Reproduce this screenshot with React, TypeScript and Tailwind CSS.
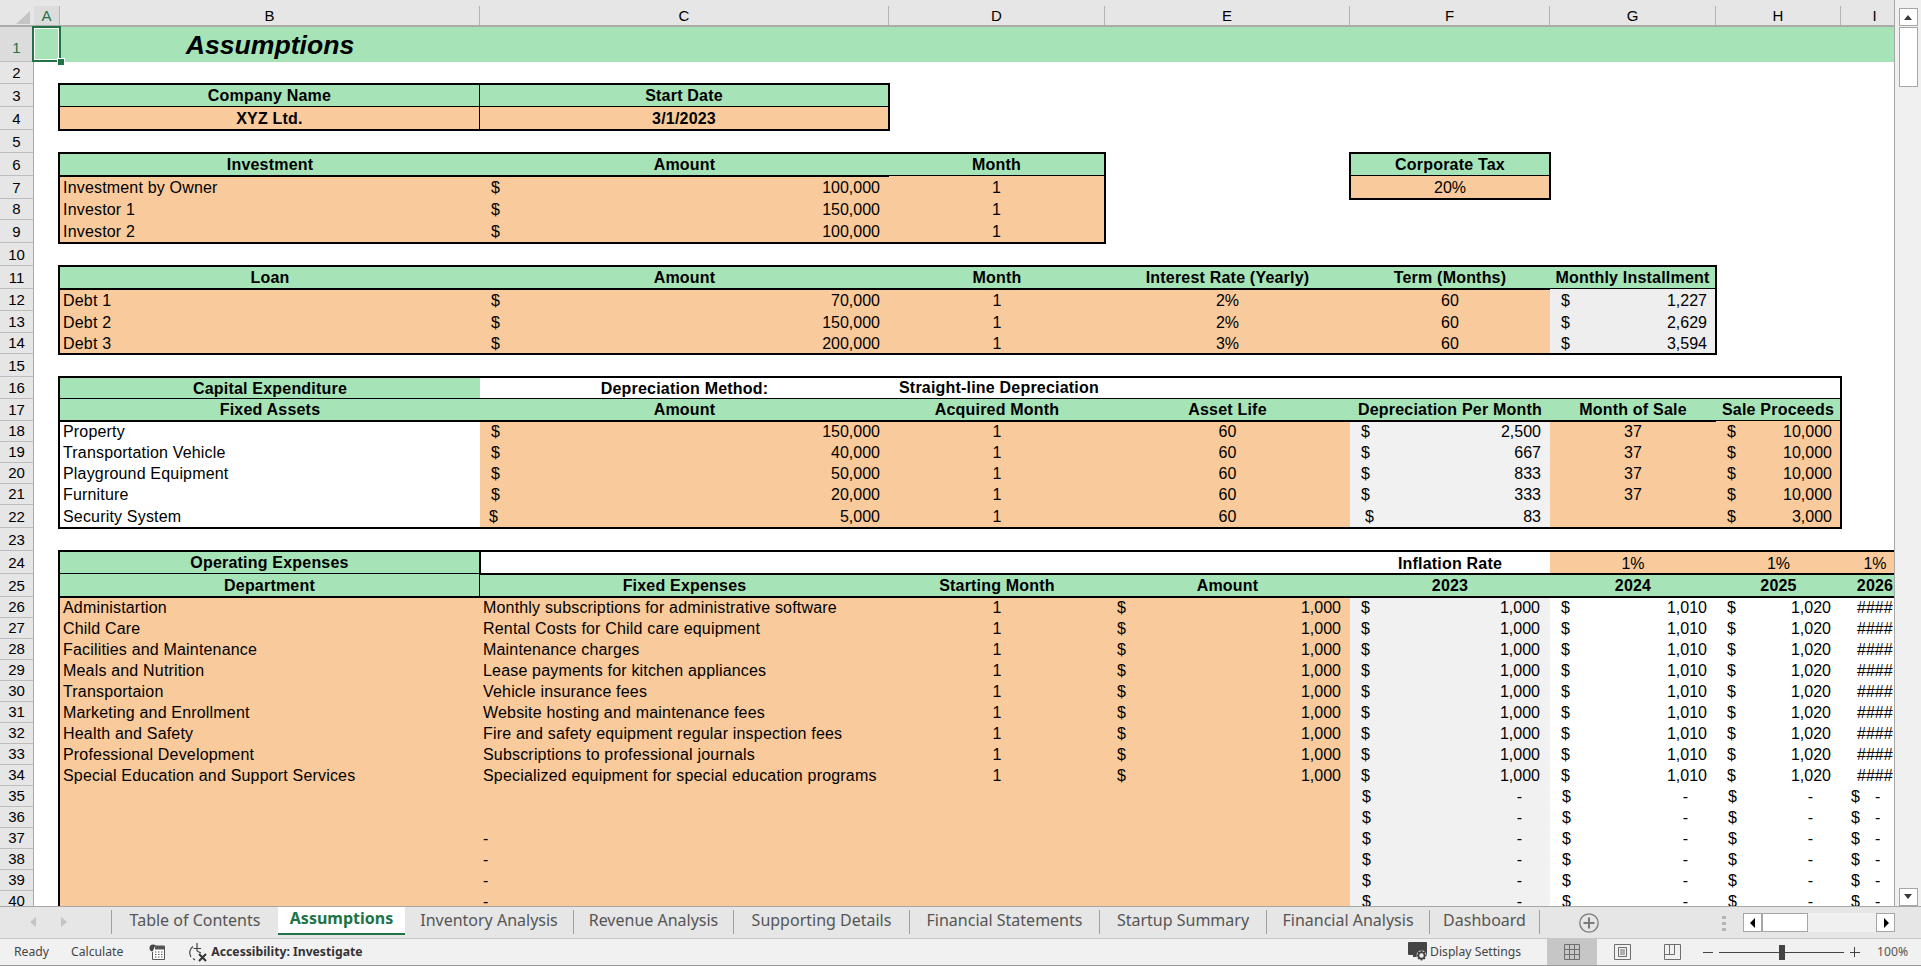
import React from "react";

const GR = "bg-[#a6e3b7]";
const OR = "bg-[#f8ca9c]";
const GY = "bg-[#f1f1f1]";
// borders straddle the grid line, as they do on a spreadsheet
const T = "border-t-2 border-t-black -mt-px";
const B = "relative border-b-2 border-b-black -mb-px";
const R = "relative border-r-2 border-r-black -mr-px";

function RowHead({ n, active }: { n: number; active?: boolean }) {
  return (
    <div
      className={
        "flex items-end justify-center border-b border-[#bdbdbd] border-r border-r-[#ababab] text-[15px] leading-[17px] font-['Liberation_Sans',sans-serif] " +
        (active ? "bg-[#dcdcdc] text-[#217346] pb-[5px]" : "bg-[#e6e6e6] text-black pb-[2px]")
      }
    >
      {n}
    </div>
  );
}

function Row({ n, edge, a, children }: { n: number; edge?: boolean; a?: string; children?: React.ReactNode }) {
  return (
    <>
      <RowHead n={n} active={n === 1} />
      <div className={(edge ? "relative border-r-2 border-r-black " : "") + (a ?? "")} />
      {children}
    </>
  );
}

function Hd({ children, className }: { children?: React.ReactNode; className?: string }) {
  return <div className={"flex items-center justify-center pt-[1px] font-bold whitespace-nowrap tracking-[0.2px] " + (className ?? "")}>{children}</div>;
}
function Ctr({ children, className }: { children?: React.ReactNode; className?: string }) {
  return <div className={"flex items-center justify-center pt-[1px] whitespace-nowrap " + (className ?? "")}>{children}</div>;
}
function Lbl({ children, className }: { children?: React.ReactNode; className?: string }) {
  return <div className={"flex items-center pl-[3px] pt-[1px] whitespace-nowrap tracking-[0.18px] " + (className ?? "")}>{children}</div>;
}
function Acct({ v, className }: { v: string; className?: string }) {
  return (
    <div className={"flex items-center justify-between pt-[1px] whitespace-nowrap " + (className ?? "pl-[11px] pr-[9px]")}>
      <span>$</span>
      <span>{v}</span>
    </div>
  );
}

const investRows = [
  ["Investment by Owner", "100,000"],
  ["Investor 1", "150,000"],
  ["Investor 2", "100,000"],
];
const debtRows = [
  ["Debt 1", "70,000", "2%", "1,227"],
  ["Debt 2", "150,000", "2%", "2,629"],
  ["Debt 3", "200,000", "3%", "3,594"],
];
const assetRows = [
  ["Property", "150,000", "2,500"],
  ["Transportation Vehicle", "40,000", "667"],
  ["Playground Equipment", "50,000", "833"],
  ["Furniture", "20,000", "333"],
];
const expenseRows = [
  ["Administartion", "Monthly subscriptions for administrative software"],
  ["Child Care", "Rental Costs for Child care equipment"],
  ["Facilities and Maintenance", "Maintenance charges"],
  ["Meals and Nutrition", "Lease payments for kitchen appliances"],
  ["Transportaion", "Vehicle insurance fees"],
  ["Marketing and Enrollment", "Website hosting and maintenance fees"],
  ["Health and Safety", "Fire and safety equipment regular inspection fees"],
  ["Professional Development", "Subscriptions to professional journals"],
  ["Special Education and Support Services", "Specialized equipment for special education programs"],
];

const colHeads: [string, string][] = [
  ["A", "bg-[#dcdcdc] text-[#217346]"],
  ["B", ""],
  ["C", ""],
  ["D", ""],
  ["E", ""],
  ["F", ""],
  ["G", ""],
  ["H", ""],
  ["I", ""],
];

function Tri({ d, c = "#000", w = 8, h = 10 }: { d: string; c?: string; w?: number; h?: number }) {
  return (
    <svg width={w} height={h} viewBox="0 0 8 10">
      <path d={d} fill={c} />
    </svg>
  );
}

function Sheet() {
  return (
    <div className="relative w-[1894px] h-[906px] overflow-hidden bg-white">
      <div className="grid grid-cols-[34px_26px_420px_409px_216px_245px_200px_166px_125px_68px] grid-rows-[27px_35px_22px_23px_23px_23px_23px_23px_21px_23px_23px_23px_22px_22px_21px_23px_22px_22px_21px_21px_21px_21px_23px_23px_23px_23px_21px_21px_21px_21px_21px_21px_21px_21px_21px_21px_21px_21px_21px_21px_21px] w-[1909px] text-[16px] leading-[18px] text-black font-['Liberation_Sans',sans-serif]">
        {/* column headers */}
        <div className="relative bg-[#e6e6e6] border-b-2 border-[#ababab]">
          <svg className="absolute left-[16px] top-[11px]" width="14" height="13" viewBox="0 0 14 13">
            <path d="M14 0V13H0Z" fill="#c4c4c4" />
          </svg>
        </div>
        {colHeads.map(([h, cls]) => (
          <div key={h} className="bg-[#e6e6e6] pt-[6px] border-b-2 border-[#ababab]">
            <div className={"flex items-center justify-center h-full border-r border-[#b4b4b4] text-[15px] leading-none " + cls}>{h}</div>
          </div>
        ))}

        <Row n={1} a={GR}>
          <Hd className={GR + " text-[26.6px] italic !tracking-normal"}>Assumptions</Hd>
          <div className={"col-span-7 " + GR} />
        </Row>
        <Row n={2}>
          <div className="col-span-8" />
        </Row>
        <Row n={3} edge a="-mt-px">
          <Hd className={`${GR} ${T} ${B} ${R}`}>Company Name</Hd>
          <Hd className={`${GR} ${T} ${B} ${R}`}>Start Date</Hd>
          <div className="col-span-6" />
        </Row>
        <Row n={4} edge a="-mb-px">
          <Hd className={`${OR} ${B} border-r border-r-black`}>XYZ Ltd.</Hd>
          <Hd className={`${OR} ${B} ${R}`}>3/1/2023</Hd>
          <div className="col-span-6" />
        </Row>
        <Row n={5}>
          <div className="col-span-8" />
        </Row>
        <Row n={6} edge a="-mt-px">
          <Hd className={`${GR} ${T} ${B}`}>Investment</Hd>
          <Hd className={`${GR} ${T} ${B}`}>Amount</Hd>
          <Hd className={`${GR} ${T} ${B} ${R}`}>Month</Hd>
          <div />
          <Hd className={`${GR} ${T} ${B} border-x-2 border-x-black -mx-px`}>Corporate Tax</Hd>
          <div className="col-span-3" />
        </Row>
        {investRows.map(([l, v], i) => {
          const b = i === 2 ? B : "";
          return (
            <Row key={l} n={7 + i} edge a={i === 2 ? "-mb-px" : ""}>
              <Lbl className={`${OR} ${b}`}>{l}</Lbl>
              <Acct v={v} className={`${OR} pl-[11px] pr-[9px] ${b}`} />
              <Ctr className={`${OR} ${R} ${b}`}>1</Ctr>
              <div />
              {i === 0 ? <Ctr className={`${OR} ${B} border-x-2 border-x-black -mx-px`}>20%</Ctr> : <div />}
              <div className="col-span-3" />
            </Row>
          );
        })}
        <Row n={10}>
          <div className="col-span-8" />
        </Row>
        <Row n={11} edge a="-mt-px">
          <Hd className={`${GR} ${T} ${B}`}>Loan</Hd>
          <Hd className={`${GR} ${T} ${B}`}>Amount</Hd>
          <Hd className={`${GR} ${T} ${B}`}>Month</Hd>
          <Hd className={`${GR} ${T} ${B}`}>Interest Rate (Yearly)</Hd>
          <Hd className={`${GR} ${T} ${B}`}>Term (Months)</Hd>
          <Hd className={`${GR} ${T} ${B} ${R}`}>Monthly Installment</Hd>
          <div className="col-span-2" />
        </Row>
        {debtRows.map(([l, v, r, m], i) => {
          const b = i === 2 ? B : "";
          return (
            <Row key={l} n={12 + i} edge a={i === 2 ? "-mb-px" : ""}>
              <Lbl className={`${OR} ${b}`}>{l}</Lbl>
              <Acct v={v} className={`${OR} pl-[11px] pr-[9px] ${b}`} />
              <Ctr className={`${OR} ${b}`}>1</Ctr>
              <Ctr className={`${OR} ${b}`}>{r}</Ctr>
              <Ctr className={`${OR} ${b}`}>60</Ctr>
              <Acct v={m} className={`bg-[#eeeeee] pl-[11px] pr-[8px] ${R} ${b}`} />
              <div className="col-span-2" />
            </Row>
          );
        })}
        <Row n={15}>
          <div className="col-span-8" />
        </Row>
        <Row n={16} edge a="-mt-px">
          <Hd className={`${GR} ${T} border-b border-b-black`}>Capital Expenditure</Hd>
          <Hd className={`${T} border-b border-b-black`}>Depreciation Method:</Hd>
          <div className={`col-span-5 flex items-center pl-[10px] font-bold tracking-[0.2px] ${T} border-b border-b-black ${R}`}>Straight-line Depreciation</div>
          <div />
        </Row>
        <Row n={17} edge>
          <Hd className={`${GR} ${B}`}>Fixed Assets</Hd>
          <Hd className={`${GR} ${B}`}>Amount</Hd>
          <Hd className={`${GR} ${B}`}>Acquired Month</Hd>
          <Hd className={`${GR} ${B}`}>Asset Life</Hd>
          <Hd className={`${GR} ${B}`}>Depreciation Per Month</Hd>
          <Hd className={`${GR} ${B}`}>Month of Sale</Hd>
          <Hd className={`${GR} ${B} ${R}`}>Sale Proceeds</Hd>
          <div />
        </Row>
        {assetRows.map(([l, v, d], i) => (
          <Row key={l} n={18 + i} edge>
            <Lbl>{l}</Lbl>
            <Acct v={v} className={`${OR} pl-[11px] pr-[9px]`} />
            <Ctr className={OR}>1</Ctr>
            <Ctr className={OR}>60</Ctr>
            <Acct v={d} className={`${GY} pl-[11px] pr-[9px]`} />
            <Ctr className={OR}>37</Ctr>
            <Acct v="10,000" className={`${OR} pl-[11px] pr-[8px] ${R}`} />
            <div />
          </Row>
        ))}
        <Row n={22} edge a="-mb-px">
          <Lbl className={B}>Security System</Lbl>
          <Acct v="5,000" className={`${OR} pl-[9px] pr-[9px] ${B}`} />
          <Ctr className={`${OR} ${B}`}>1</Ctr>
          <Ctr className={`${OR} ${B}`}>60</Ctr>
          <Acct v="83" className={`${GY} pl-[15px] pr-[9px] ${B}`} />
          <div className={`${OR} ${B}`} />
          <Acct v="3,000" className={`${OR} pl-[11px] pr-[8px] ${B} ${R}`} />
          <div />
        </Row>
        <Row n={23}>
          <div className="col-span-8" />
        </Row>
        <Row n={24} edge a="-mt-px">
          <Hd className={`${GR} ${T} ${B} ${R}`}>Operating Expenses</Hd>
          <div className={`col-span-3 ${T}`} />
          <Hd className={T}>Inflation Rate</Hd>
          <Ctr className={`${OR} ${T}`}>1%</Ctr>
          <Ctr className={`${OR} ${T}`}>1%</Ctr>
          <Ctr className={`${OR} ${T}`}>1%</Ctr>
        </Row>
        <Row n={25} edge>
          <Hd className={`${GR} ${B} ${R}`}>Department</Hd>
          <Hd className={`${GR} ${T} ${B}`}>Fixed Expenses</Hd>
          <Hd className={`${GR} ${T} ${B}`}>Starting Month</Hd>
          <Hd className={`${GR} ${T} ${B}`}>Amount</Hd>
          <Hd className={`${GR} ${T} ${B}`}>2023</Hd>
          <Hd className={`${GR} ${T} ${B}`}>2024</Hd>
          <Hd className={`${GR} ${T} ${B}`}>2025</Hd>
          <Hd className={`${GR} ${T} ${B}`}>2026</Hd>
        </Row>
        {expenseRows.map(([l, x], i) => (
          <Row key={l} n={26 + i} edge>
            <Lbl className={OR}>{l}</Lbl>
            <Lbl className={OR}>{x}</Lbl>
            <Ctr className={OR}>1</Ctr>
            <Acct v="1,000" className={`${OR} pl-[12px] pr-[9px]`} />
            <Acct v="1,000" className={`${GY} pl-[11px] pr-[10px]`} />
            <Acct v="1,010" className="pl-[11px] pr-[9px]" />
            <Acct v="1,020" className="pl-[11px] pr-[10px]" />
            <div className="flex items-center pt-[1px] pl-[16px]">####</div>
          </Row>
        ))}
        {[35, 36, 37, 38, 39, 40].map((n) => (
          <Row key={n} n={n} edge>
            <div className={OR} />
            <Lbl className={OR}>{n >= 37 ? "-" : ""}</Lbl>
            <div className={OR} />
            <div className={OR} />
            <Acct v="-" className={`${GY} pl-[12px] pr-[28px]`} />
            <Acct v="-" className="pl-[12px] pr-[28px]" />
            <Acct v="-" className="pl-[12px] pr-[28px]" />
            <div className="flex items-center gap-[15px] pt-[1px] pl-[10px]">
              <span>$</span>
              <span>-</span>
            </div>
          </Row>
        ))}
      </div>

      {/* selected cell A1 */}
      <div className="absolute left-[32px] top-[26px] w-[29px] h-[36px] border-2 border-[#217346]">
        <div className="w-full h-full border border-white" />
      </div>
      <div className="absolute left-[57px] top-[58px] w-[6px] h-[6px] bg-[#217346] border border-white box-content" />
    </div>
  );
}

function VScroll() {
  const btn = "mx-auto w-[19px] flex items-center justify-center bg-white border border-[#a6a6a6]";
  return (
    <div className="flex-1 flex flex-col bg-[#f0f0f0] border-l border-[#a6a6a6] h-[906px] pt-[8px]">
      <div className={btn + " h-[18px]"}>
        <Tri d="M0 8L4 3L8 8Z" c="#3a3a3a" />
      </div>
      <div className={btn + " h-[60px] mt-[1px]"} />
      <div className="flex-1" />
      <div className={btn + " h-[18px]"}>
        <Tri d="M0 2L4 7L8 2Z" c="#3a3a3a" />
      </div>
    </div>
  );
}

const tabs: [string, string][] = [
  ["Inventory Analysis", "w-[169px]"],
  ["Revenue Analysis", "w-[160px]"],
  ["Supporting Details", "w-[176px]"],
  ["Financial Statements", "w-[190px]"],
  ["Startup Summary", "w-[167px]"],
  ["Financial Analysis", "w-[163px]"],
  ["Dashboard", "w-[110px]"],
];

function Tabs() {
  const uiFont = "font-['Noto_Sans',sans-serif]";
  return (
    <div className={"h-[32px] flex items-start bg-[#e6e6e6] border-t border-[#a6a6a6] text-[16px] leading-none text-[#555555] " + uiFont}>
      <div className="w-[112px] h-[24px] mt-[3px] flex items-center border-r border-[#a0a0a0] pl-[29px] gap-[23px]">
        <Tri d="M7 0V10L1 5Z" c="#c4c4c4" />
        <Tri d="M1 0V10L7 5Z" c="#c4c4c4" />
      </div>
      <div className="w-[166px] h-[24px] mt-[3px] pb-[5px] flex items-center justify-center">Table of Contents</div>
      <div className="w-[127px] h-[28px] flex items-center justify-center bg-white font-bold text-[#217346] border-b-2 border-[#217346] pb-[5px]">Assumptions</div>
      {tabs.map(([t, w]) => (
        <div key={t} className={"h-[24px] mt-[3px] pb-[5px] flex items-center justify-center border-r border-[#a0a0a0] " + w}>
          {t}
        </div>
      ))}
      <svg className="ml-[39px] mt-[6px]" width="20" height="20" viewBox="0 0 20 20" fill="none" stroke="#7b7b7b">
        <circle cx="10" cy="10" r="9.2" strokeWidth="1.3" />
        <path d="M10 4.5V15.5M4.5 10H15.5" strokeWidth="2" />
      </svg>
      <div className="ml-[123px] mt-[9px] flex flex-col gap-[3px]">
        <div className="w-[4px] h-[3px] bg-[#b5b5b5]" />
        <div className="w-[4px] h-[3px] bg-[#b5b5b5]" />
        <div className="w-[4px] h-[3px] bg-[#b5b5b5]" />
      </div>
      <div className="ml-[17px] mt-[6px] w-[152px] h-[19px] flex bg-[#f0f0f0]">
        <div className="w-[19px] h-full bg-white border border-[#a6a6a6] flex items-center justify-center">
          <Tri d="M6 0V10L1 5Z" />
        </div>
        <div className="w-[46px] h-full bg-white border border-[#a6a6a6]" />
        <div className="flex-1" />
        <div className="w-[19px] h-full bg-white border border-[#a6a6a6] flex items-center justify-center">
          <Tri d="M2 0V10L7 5Z" />
        </div>
      </div>
    </div>
  );
}

function Status() {
  return (
    <div className="h-[28px] flex items-center bg-[#f1f1f1] border-t border-[#c8c8c8] border-b border-b-[#9a9a9a] text-[12.2px] leading-none text-[#444444] font-['Noto_Sans',sans-serif]">
      <span className="ml-[14px]">Ready</span>
      <span className="ml-[22px]">Calculate</span>
      <svg className="ml-[26px]" width="16" height="16" viewBox="0 0 16 16">
        <circle cx="4" cy="4" r="3.5" fill="#444" />
        <path d="M6 2H15.5V15.5H3.5V8" fill="#fff" stroke="#555" />
        <rect x="6" y="2" width="10" height="3.5" fill="#555" />
        <path d="M6 8h1.5M9 8h1.5M12 8h1.5M6 10.5h1.5M9 10.5h1.5M12 10.5h1.5M6 13h1.5M9 13h1.5M12 13h1.5" stroke="#555" />
      </svg>
      <svg className="ml-[23px]" width="20" height="20" viewBox="0 0 20 20" fill="none" stroke="#444" strokeWidth="1.2">
        <path d="M5 4.5A7.5 7.5 0 0 0 3 15M5 16.5L7 18" />
        <path d="M9 1V9M5.5 6.5H13M9 9L13 11" />
        <path d="M11 12L18 19M18 12L11 19" strokeWidth="2" stroke="#333" />
      </svg>
      <span className="ml-[3px] font-bold text-[#333333]">Accessibility: Investigate</span>
      <div className="ml-auto flex items-center h-full">
        <svg width="21" height="21" viewBox="0 0 21 21">
          <rect x="0" y="0" width="19" height="13" rx="1" fill="#444" />
          <rect x="5" y="13" width="8" height="2" fill="#444" />
          <circle cx="13.5" cy="13.5" r="5" fill="#f1f1f1" />
          <circle cx="13.5" cy="13.5" r="3.2" fill="none" stroke="#444" strokeWidth="2" />
          <path d="M13.5 8.5V10M13.5 17V18.5M8.5 13.5H10M17 13.5H18.5M10 10L11 11M16 16L17 17M17 10L16 11M11 16L10 17" stroke="#444" strokeWidth="1.5" />
        </svg>
        <span className="ml-[1px] w-[117px]">Display Settings</span>
        <div className="w-[50px] h-full bg-[#c6c6c6] flex items-center justify-center">
          <svg width="16" height="16" viewBox="0 0 16 16" fill="none" stroke="#6e6e6e">
            <path d="M.5.5H15.5V15.5H.5ZM5.5.5V15.5M10.5.5V15.5M.5 5.5H15.5M.5 10.5H15.5" />
          </svg>
        </div>
        <div className="w-[50px] h-full flex items-center justify-center">
          <svg width="17" height="16" viewBox="0 0 17 16" fill="none" stroke="#6e6e6e">
            <path d="M.5.5H16.5V15.5H.5ZM4.5 3.5H12.5V12.5H4.5ZM6 6H11M6 8H11M6 10H11" />
          </svg>
        </div>
        <div className="w-[50px] h-full flex items-center justify-center">
          <svg width="17" height="16" viewBox="0 0 17 16" fill="none" stroke="#6e6e6e">
            <path d="M.5.5H16.5V15.5H.5ZM.5 10.5H10.5V.5M5.5.5V10.5" />
          </svg>
        </div>
        <div className="ml-[6px] w-[10px] h-[1px] bg-[#444444]" />
        <div className="relative ml-[6px] w-[125px] h-[1px] bg-[#444444]">
          <div className="absolute left-[60px] top-[-7px] w-[6px] h-[15px] bg-[#444444]" />
        </div>
        <div className="relative ml-[6px] w-[10px] h-[10px]">
          <div className="absolute left-0 top-[5px] w-[10px] h-[1px] bg-[#444444]" />
          <div className="absolute left-[4px] top-0 w-[1px] h-[10px] bg-[#444444]" />
        </div>
        <span className="ml-[17px] mr-[14px] w-[30px] text-[#555555]">100%</span>
      </div>
    </div>
  );
}

export default function App() {
  return (
    <div className="w-[1921px] h-[966px] overflow-hidden flex flex-col bg-white">
      <div className="flex h-[906px]">
        <Sheet />
        <VScroll />
      </div>
      <Tabs />
      <Status />
    </div>
  );
}
